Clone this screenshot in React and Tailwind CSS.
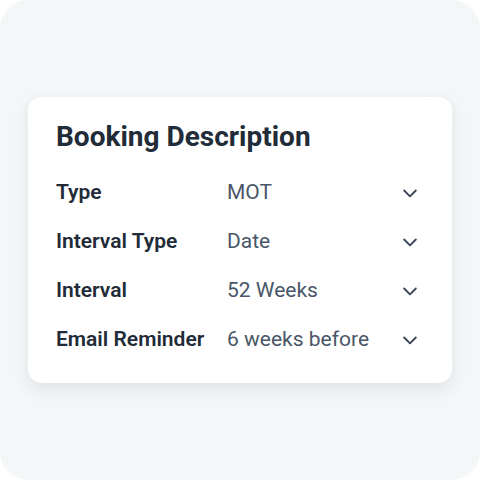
import React from 'react';

const rows = [
  { label: 'Type', value: 'MOT' },
  { label: 'Interval Type', value: 'Date' },
  { label: 'Interval', value: '52 Weeks' },
  { label: 'Email Reminder', value: '6 weeks before' },
];

const Chevron = () => (
  <svg width="20" height="20" viewBox="0 0 24 24" fill="none" stroke="#3b4656" strokeWidth="2.3" strokeLinecap="round" strokeLinejoin="round">
    <path d="M5 9l7 7 7-7" />
  </svg>
);

export default function App() {
  return (
    <div className="w-[480px] h-[480px] bg-white">
      <div
        className="w-full h-full rounded-[28px] bg-[#f4f7f8] flex items-start pt-[97px] px-[28px]"
        style={{ fontFamily: 'Roboto, "Liberation Sans", sans-serif' }}
      >
        <div className="w-full bg-white rounded-[14px] shadow-[0_6px_16px_rgba(30,50,70,0.10)] px-[28px] pt-[24px] pb-[19px]">
          <h1 className="text-[28px] leading-[32px] font-bold text-[#222b38] mb-[15px]">Booking Description</h1>
          <div className="flex flex-col">
            {rows.map((r) => (
              <div key={r.label} className="flex items-center h-[49px]">
                <span className="w-[171px] text-[21px] font-semibold text-[#222b38]">{r.label}</span>
                <span className="flex-1 text-[21px] text-[#4a5668]">{r.value}</span>
                <span className="w-[20px] mr-[4px] flex items-center"><Chevron /></span>
              </div>
            ))}
          </div>
        </div>
      </div>
    </div>
  );
}
